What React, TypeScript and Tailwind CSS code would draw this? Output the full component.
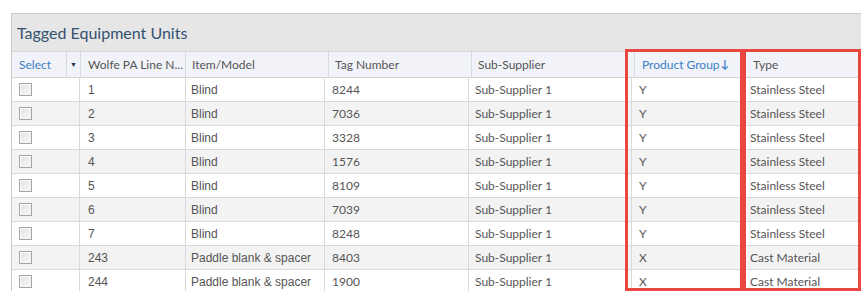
import React from "react";

interface Unit {
  line: string;
  item: string;
  tag: string;
  supplier: string;
  group: string;
  type: string;
}

const units: Unit[] = [
  { line: "1", item: "Blind", tag: "8244", supplier: "Sub-Supplier 1", group: "Y", type: "Stainless Steel" },
  { line: "2", item: "Blind", tag: "7036", supplier: "Sub-Supplier 1", group: "Y", type: "Stainless Steel" },
  { line: "3", item: "Blind", tag: "3328", supplier: "Sub-Supplier 1", group: "Y", type: "Stainless Steel" },
  { line: "4", item: "Blind", tag: "1576", supplier: "Sub-Supplier 1", group: "Y", type: "Stainless Steel" },
  { line: "5", item: "Blind", tag: "8109", supplier: "Sub-Supplier 1", group: "Y", type: "Stainless Steel" },
  { line: "6", item: "Blind", tag: "7039", supplier: "Sub-Supplier 1", group: "Y", type: "Stainless Steel" },
  { line: "7", item: "Blind", tag: "8248", supplier: "Sub-Supplier 1", group: "Y", type: "Stainless Steel" },
  { line: "243", item: "Paddle blank & spacer", tag: "8403", supplier: "Sub-Supplier 1", group: "X", type: "Cast Material" },
  { line: "244", item: "Paddle blank & spacer", tag: "1900", supplier: "Sub-Supplier 1", group: "X", type: "Cast Material" },
];

const lato = "font-['Lato','Noto_Sans',sans-serif]";
const arial = "font-['Liberation_Sans',Arial,sans-serif]";

export default function App() {
  return (
    <div className="relative w-[861px] h-[291px] overflow-hidden bg-white">
      <div className="ml-[11px] mt-[13px] w-[900px] border-t border-l border-[#c9c9c9]">
        {/* panel title */}
        <div className="h-[38px] bg-[#e6e6e6] border-b border-[#d3d7de] flex items-center pl-[5px]">
          <span className={`${lato} text-[16px] text-[#34506f]`}>Tagged Equipment Units</span>
        </div>

        {/* column headers */}
        <div className={`${lato} h-[26px] bg-[#f1f3f8] border-b border-[#d4d4d4] flex text-[12px] text-[#555]`}>
          <div className="w-[55px] border-r border-[#d6dae2] flex items-center pl-[7px] text-[#3a80c6]">Select</div>
          <div className="w-[14px] border-r border-[#d6dae2] flex items-center justify-center text-[7px] text-[#1f3550]">▼</div>
          <div className="w-[105px] border-r border-[#d6dae2] flex items-center pl-[7px]">Wolfe PA Line N...</div>
          <div className="w-[143px] border-r border-[#d6dae2] flex items-center pl-[6px]">Item/Model</div>
          <div className="w-[143px] border-r border-[#d6dae2] flex items-center pl-[6px]">Tag Number</div>
          <div className="w-[163px] border-r border-[#d6dae2] flex items-center pl-[6px]">Sub-Supplier</div>
          <div className="w-[110px] border-r border-[#d6dae2] flex items-center pl-[7px] text-[#3a80c6]">
            Product Group<span className="text-[11px] font-bold ml-[1px]">↓</span>
          </div>
          <div className="w-[150px] flex items-center pl-[8px]">Type</div>
        </div>

        {/* rows */}
        {units.map((u, i) => (
          <div
            key={u.line}
            className={`h-[24px] flex text-[12px] text-[#555] border-b border-[#d9d9d9] ${i % 2 === 1 ? "bg-[#f3f3f3]" : "bg-white"}`}
          >
            <div className="w-[68px] border-r border-[#d9d9d9] flex items-center pl-[7px]">
              <span className="w-[13px] h-[13px] border border-[#a3a3a3] bg-gradient-to-br from-[#e2e2e2] to-[#f8f8f8] shadow-[inset_1px_1px_0_#fff]" />
            </div>
            <div className={`${arial} w-[106px] border-r border-[#d9d9d9] flex items-center pl-[8px]`}>{u.line}</div>
            <div className={`${arial} w-[139px] border-r border-[#d9d9d9] flex items-center pl-[5px]`}>{u.item}</div>
            <div className={`${lato} w-[144px] border-r border-[#d9d9d9] flex items-center pl-[7px]`}>{u.tag}</div>
            <div className={`${lato} w-[163px] border-r border-[#d9d9d9] flex items-center pl-[6px]`}>{u.supplier}</div>
            <div className={`${lato} w-[113px] border-r border-[#d9d9d9] flex items-center pl-[7px]`}>{u.group}</div>
            <div className={`${lato} w-[150px] flex items-center pl-[5px]`}>{u.type}</div>
          </div>
        ))}
      </div>

      {/* highlight boxes */}
      <div className="absolute left-[625px] top-[49px] w-[118px] h-[242px] border-[3px] border-[#e8463f]" />
      <div className="absolute left-[743px] top-[49px] w-[118px] h-[242px] border-[3px] border-[#e8463f]" />
    </div>
  );
}
